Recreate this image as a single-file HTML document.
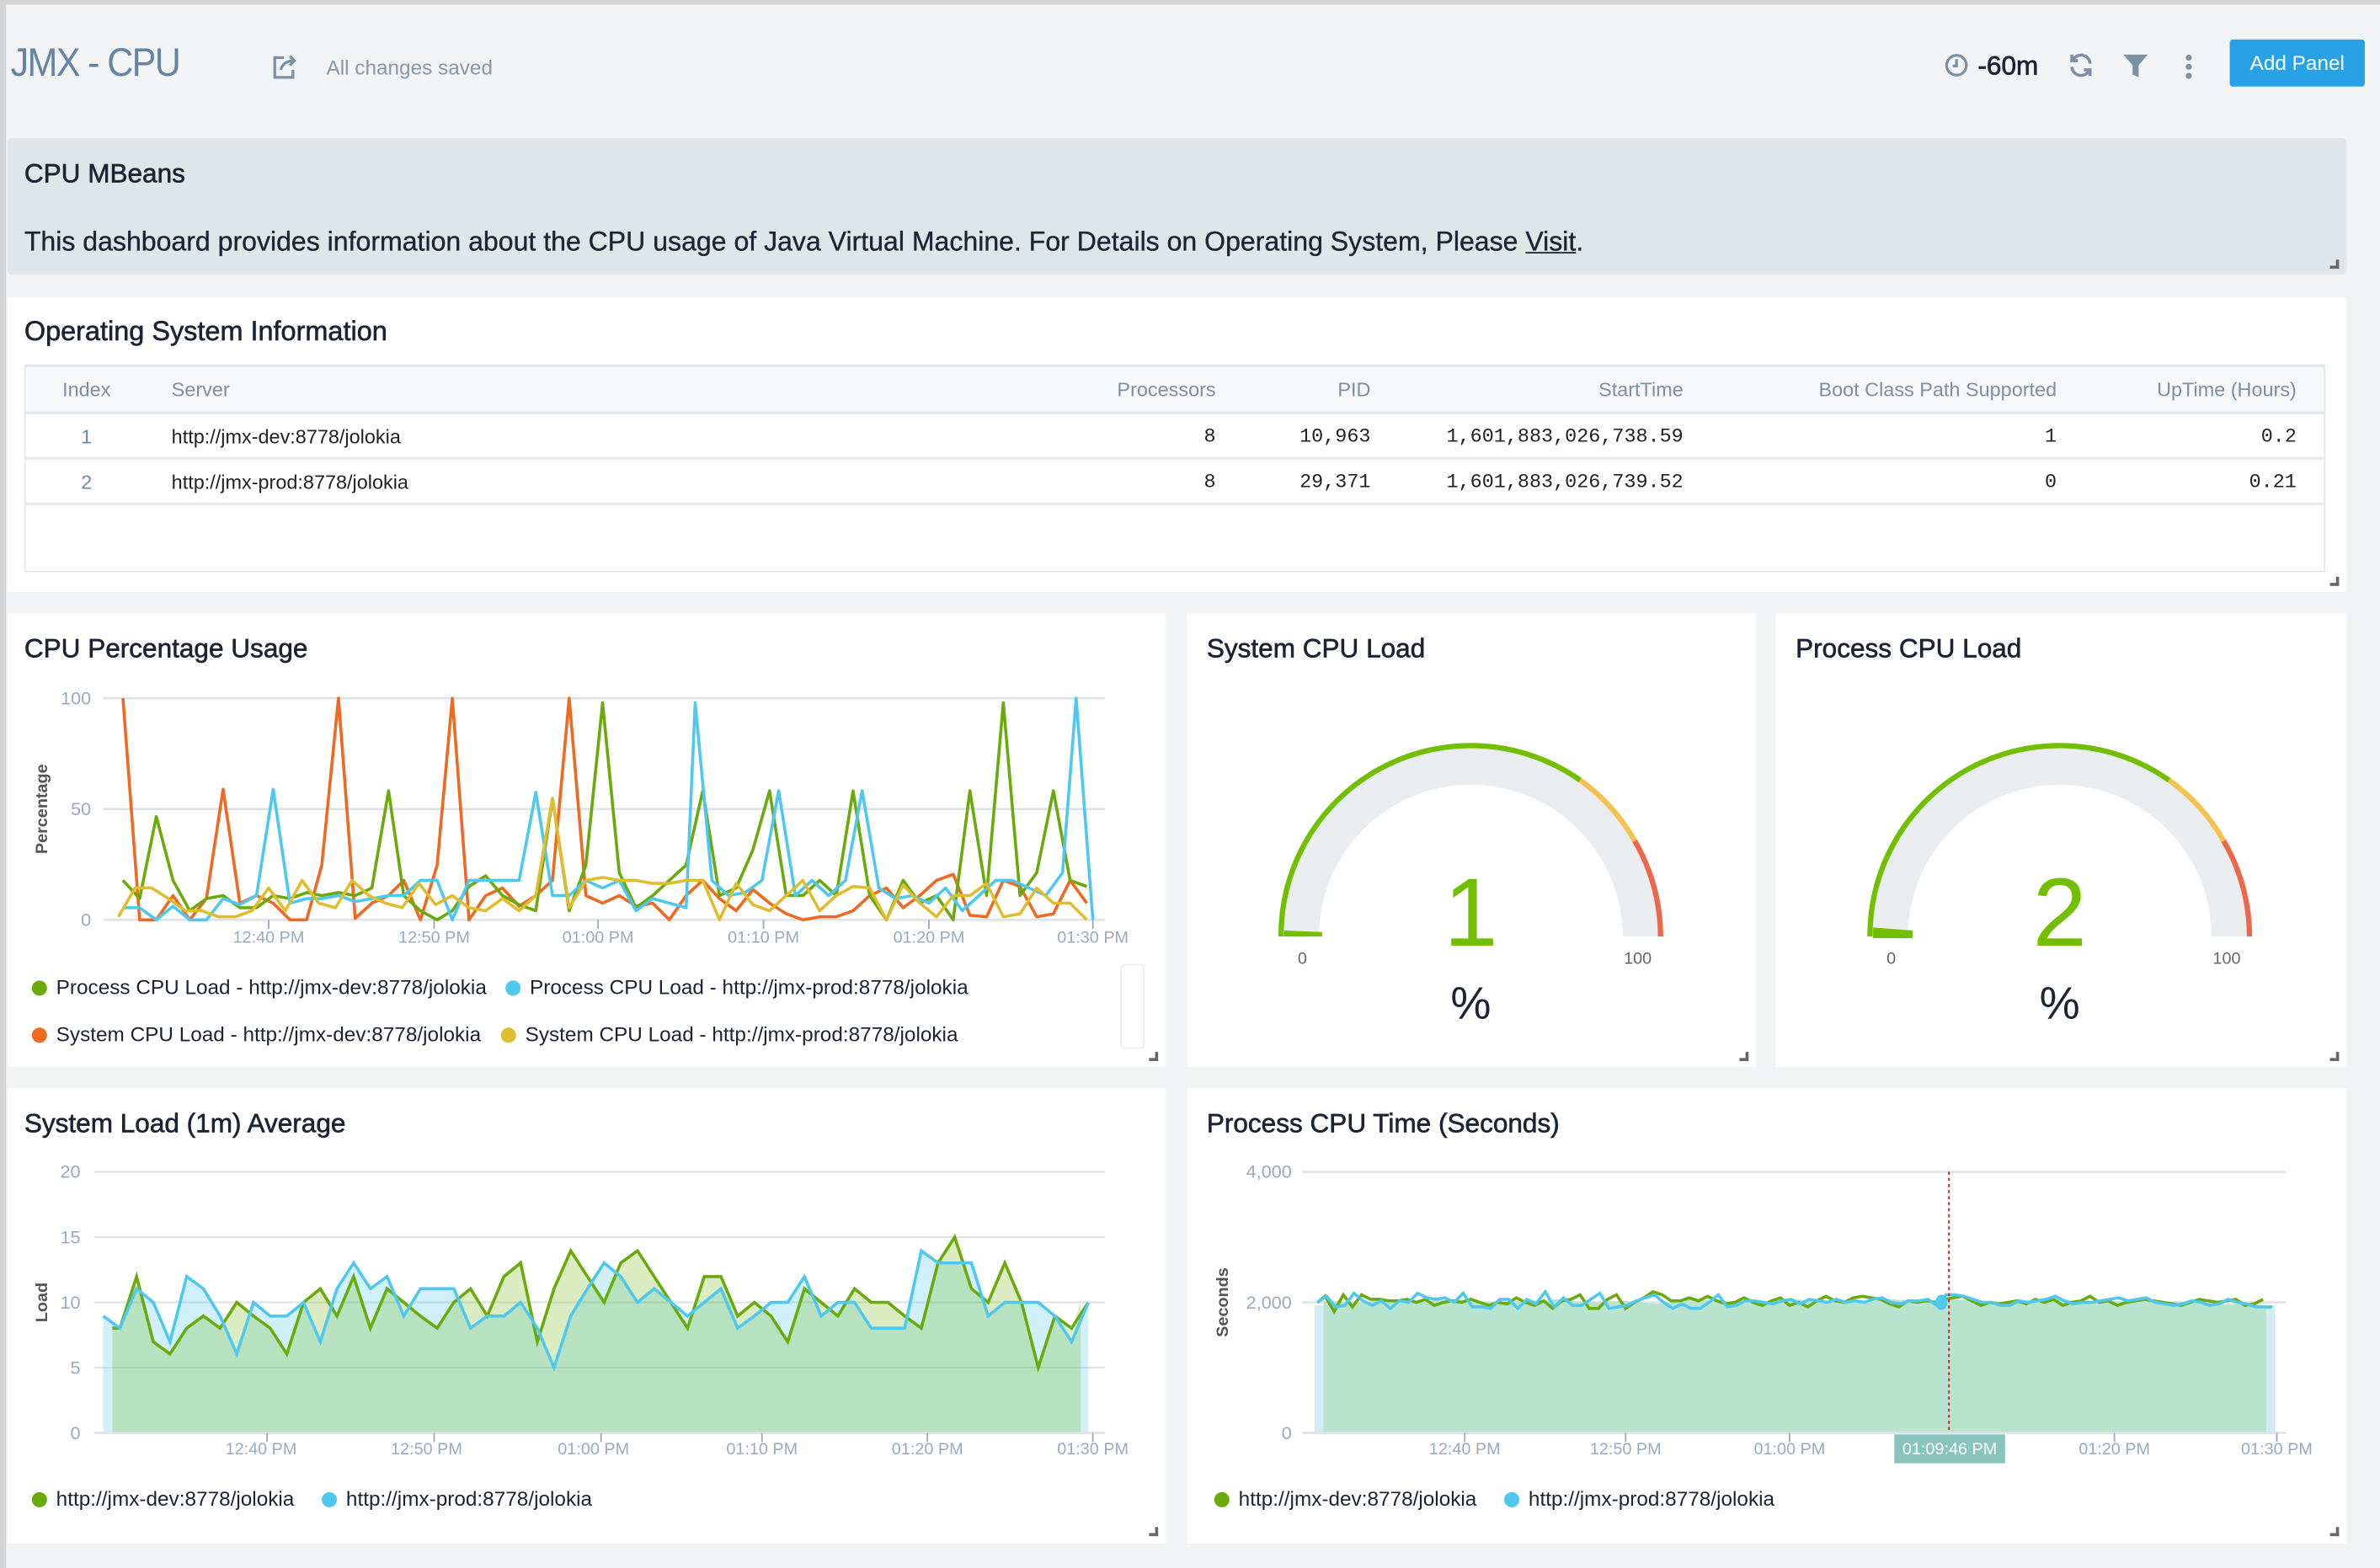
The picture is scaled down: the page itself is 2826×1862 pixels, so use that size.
<!DOCTYPE html>
<html><head><meta charset="utf-8">
<style>
*{margin:0;padding:0;box-sizing:border-box}
html,body{width:2826px;height:1862px;overflow:hidden;background:#f2f3f5}
#root{position:absolute;left:0;top:0;width:1568px;height:1033px;transform:scale(1.80230,1.80252);transform-origin:0 0;background:#f2f3f5;font-family:"Liberation Sans",sans-serif;color:#1c2434}
.abs{position:absolute}
.panel{position:absolute;background:#fff}
.title{position:absolute;font-size:17.5px;-webkit-text-stroke:0.35px #1c2434;white-space:nowrap}
.corner{position:absolute;width:6px;height:6px;border-right:2px solid #666;border-bottom:2px solid #666}
table{border-collapse:collapse;width:100%;font-size:13px}
th{font-weight:normal;color:#7d8fa3;height:30px;background:#f7f8fa;border-bottom:2px solid #e3e7eb}
td{height:30px;border-bottom:2px solid #e8ebee;font-family:"Liberation Mono",monospace;font-size:13px;color:#222}
.r{text-align:right}
.leg{position:absolute;font-size:13.5px;white-space:nowrap;color:#1c2434}
.dot{display:inline-block;width:10px;height:10px;border-radius:50%;margin-right:6px;vertical-align:-1px}
</style></head><body>
<div id="root">
<div class="abs" style="left:0;top:0;width:1568px;height:3px;background:#d4d4d4"></div>
<div class="abs" style="left:0;top:0;width:4px;height:1033px;background:#d4d4d4"></div>

<!-- header -->
<div class="abs" style="left:7px;top:26px;font-size:26px;color:#6484a3;font-weight:300;letter-spacing:-1px;transform:scaleX(0.92);transform-origin:0 0">JMX - CPU</div>
<svg class="abs" style="left:179px;top:35px" width="18" height="18" viewBox="0 0 18 18"><path d="M8 3H2v13h12v-5" fill="none" stroke="#7d8fa3" stroke-width="1.8"/><path d="M6 11c1-4 4-6 9-6M12 2l3 3-3 3" fill="none" stroke="#7d8fa3" stroke-width="1.8"/></svg>
<div class="abs" style="left:215px;top:37px;font-size:13.5px;color:#8796a8">All changes saved</div>
<svg class="abs" style="left:1281px;top:35px" width="16" height="16"><circle cx="8" cy="8" r="6.5" fill="none" stroke="#7d8fa3" stroke-width="1.8"/><path d="M8 4v4.5h-2.5" fill="none" stroke="#7d8fa3" stroke-width="1.8"/></svg>
<div class="abs" style="left:1303px;top:33px;font-size:17.5px;color:#1c2434;-webkit-text-stroke:0.4px #1c2434">-60m</div>
<svg class="abs" style="left:1362px;top:34px" width="18" height="18"><path d="M15 8A6 6 0 0 0 4 5M3 10a6 6 0 0 0 11 3" fill="none" stroke="#7d8fa3" stroke-width="2"/><path d="M3 2v4h4M15 16v-4h-4" fill="none" stroke="#7d8fa3" stroke-width="2"/></svg>
<svg class="abs" style="left:1398px;top:35px" width="18" height="17"><path d="M1 1h16l-6 7v8l-4-2V8z" fill="#7d8fa3"/></svg>
<div class="abs" style="left:1440px;top:36px;width:4px;height:4px;border-radius:2px;background:#7d8fa3"></div>
<div class="abs" style="left:1440px;top:42px;width:4px;height:4px;border-radius:2px;background:#7d8fa3"></div>
<div class="abs" style="left:1440px;top:48px;width:4px;height:4px;border-radius:2px;background:#7d8fa3"></div>
<div class="abs" style="left:1469px;top:26px;width:89px;height:31px;background:#28a1e7;border-radius:2px;color:#fff;font-size:13.5px;text-align:center;line-height:31px">Add Panel</div>

<!-- text panel -->
<div class="panel" style="left:5px;top:91px;width:1541px;height:90px;background:#e0e5ea;border-radius:3px"></div>
<div class="title" style="left:16px;top:104px">CPU MBeans</div>
<div class="abs" style="left:16px;top:149px;font-size:17.8px;white-space:nowrap;-webkit-text-stroke:0.2px #1c2434">This dashboard provides information about the CPU usage of Java Virtual Machine. For Details on Operating System, Please <u>Visit</u>.</div>
<div class="corner" style="left:1535px;top:171px"></div>

<!-- OS info -->
<div class="panel" style="left:5px;top:196px;width:1541px;height:194px"></div>
<div class="title" style="left:16px;top:208px;font-size:18px">Operating System Information</div>
<div class="abs" style="left:16px;top:240px;width:1516px;height:137px;border:1px solid #e3e7eb;border-top:2px solid #e3e7eb">
<table>
<tr><th style="width:80px;text-align:center">Index</th><th style="text-align:left;padding-left:16px">Server</th><th class="r" style="width:240px;padding-right:8px">Processors</th><th class="r" style="width:94px;padding-right:0">PID</th><th class="r" style="width:206px">StartTime</th><th class="r" style="width:246px">Boot Class Path Supported</th><th class="r" style="width:176px;padding-right:18px">UpTime (Hours)</th></tr>
<tr><td style="text-align:center;color:#6b88ad;font-family:'Liberation Sans',sans-serif">1</td><td style="padding-left:16px;font-family:'Liberation Sans',sans-serif">http://jmx-dev:8778/jolokia</td><td class="r" style="padding-right:8px">8</td><td class="r">10,963</td><td class="r">1,601,883,026,738.59</td><td class="r">1</td><td class="r" style="padding-right:18px">0.2</td></tr>
<tr><td style="text-align:center;color:#6b88ad;font-family:'Liberation Sans',sans-serif">2</td><td style="padding-left:16px;font-family:'Liberation Sans',sans-serif">http://jmx-prod:8778/jolokia</td><td class="r" style="padding-right:8px">8</td><td class="r">29,371</td><td class="r">1,601,883,026,739.52</td><td class="r">0</td><td class="r" style="padding-right:18px">0.21</td></tr>
</table></div>
<div class="corner" style="left:1535px;top:380px"></div>

<!-- row 3 -->
<div class="panel" style="left:5px;top:404px;width:763px;height:299px"></div>
<div class="panel" style="left:782px;top:404px;width:375px;height:299px"></div>
<div class="panel" style="left:1170px;top:404px;width:376px;height:299px"></div>
<div class="title" style="left:16px;top:417px">CPU Percentage Usage</div>
<div class="title" style="left:795px;top:417px">System CPU Load</div>
<div class="title" style="left:1183px;top:417px">Process CPU Load</div>
<div class="corner" style="left:757px;top:693px"></div>
<div class="corner" style="left:1146px;top:693px"></div>
<div class="corner" style="left:1535px;top:693px"></div>
<div class="abs" style="left:738px;top:635px;width:16px;height:56px;border:1px solid #eceef0;border-radius:3px"></div>

<div class="leg" style="left:21px;top:643px"><span class="dot" style="background:#6aaa0b"></span>Process CPU Load - http://jmx-dev:8778/jolokia</div>
<div class="leg" style="left:333px;top:643px"><span class="dot" style="background:#4fc8ef"></span>Process CPU Load - http://jmx-prod:8778/jolokia</div>
<div class="leg" style="left:21px;top:674px"><span class="dot" style="background:#ee6a22"></span>System CPU Load - http://jmx-dev:8778/jolokia</div>
<div class="leg" style="left:330px;top:674px"><span class="dot" style="background:#dfbd2e"></span>System CPU Load - http://jmx-prod:8778/jolokia</div>

<!-- row 4 -->
<div class="panel" style="left:5px;top:717px;width:763px;height:300px"></div>
<div class="panel" style="left:782px;top:717px;width:764px;height:300px"></div>
<div class="title" style="left:16px;top:730px">System Load (1m) Average</div>
<div class="title" style="left:795px;top:730px">Process CPU Time (Seconds)</div>
<div class="corner" style="left:757px;top:1006px"></div>
<div class="corner" style="left:1535px;top:1006px"></div>
<div class="leg" style="left:21px;top:980px"><span class="dot" style="background:#6aaa0b"></span>http://jmx-dev:8778/jolokia</div>
<div class="leg" style="left:212px;top:980px"><span class="dot" style="background:#4fc8ef"></span>http://jmx-prod:8778/jolokia</div>
<div class="leg" style="left:800px;top:980px"><span class="dot" style="background:#6aaa0b"></span>http://jmx-dev:8778/jolokia</div>
<div class="leg" style="left:991px;top:980px"><span class="dot" style="background:#4fc8ef"></span>http://jmx-prod:8778/jolokia</div>

<svg class="abs" style="left:0;top:0" width="1568" height="1033" font-family="Liberation Sans, sans-serif">
<!-- CPU chart -->
<g stroke="#dde3e8" stroke-width="1.5"><line x1="68" y1="460" x2="728" y2="460"/><line x1="68" y1="533" x2="728" y2="533"/><line x1="68" y1="606" x2="728" y2="606"/></g>
<g fill="#9aaabd" font-size="12" text-anchor="end"><text x="60" y="464">100</text><text x="60" y="537">50</text><text x="60" y="610">0</text></g>
<text transform="translate(31,533) rotate(-90)" text-anchor="middle" font-size="11" font-weight="bold" fill="#555">Percentage</text>
<g stroke="#9aaabd" stroke-width="1"><line x1="177" y1="606" x2="177" y2="612"/><line x1="286" y1="606" x2="286" y2="612"/><line x1="394" y1="606" x2="394" y2="612"/><line x1="503" y1="606" x2="503" y2="612"/><line x1="612" y1="606" x2="612" y2="612"/><line x1="720" y1="606" x2="720" y2="612"/></g>
<g fill="#9aaabd" font-size="11" text-anchor="middle"><text x="177" y="621">12:40 PM</text><text x="286" y="621">12:50 PM</text><text x="394" y="621">01:00 PM</text><text x="503" y="621">01:10 PM</text><text x="612" y="621">01:20 PM</text><text x="720" y="621">01:30 PM</text></g>
<g fill="none" stroke-width="2" stroke-linejoin="round">
<polyline stroke="#ee6a22" points="81,460 92,606 103,606 114,590 125,606 136,592 147,520 158,595 169,590 180,595 191,606 202,606 212,570 223,460 234,605 245,595 256,590 266,580 277,606 288,570 298,460 309,606 320,590 331,585 342,597 353,590 364,580 375,460 386,590 397,595 408,590 419,597 430,595 441,606 452,590 463,580 474,592 485,600 496,586 507,595 518,602 529,606 540,604 551,604 562,600 573,590 584,585 595,598 606,590 617,580 628,576 639,603 650,604 661,580 672,584 683,604 694,602 705,580 716,595"/>
<polyline stroke="#6aaa0b" points="81,580 92,592 103,538 114,580 125,600 136,592 147,590 158,598 169,598 180,590 191,592 202,588 212,590 223,588 234,590 245,585 256,521 266,590 277,600 288,606 298,600 309,584 320,577 331,590 342,596 353,600 364,526 375,600 386,570 397,463 408,575 419,598 430,590 441,580 452,570 463,521 474,590 485,585 496,560 507,521 518,590 529,590 540,580 551,590 562,521 573,590 584,606 595,580 606,595 617,590 628,606 639,521 650,590 661,463 672,590 683,575 694,521 705,580 716,584"/>
<polyline stroke="#4fc8ef" points="81,598 92,598 103,606 114,597 125,606 136,606 147,592 158,596 169,590 180,520 191,595 202,592 212,592 223,590 234,594 245,592 256,590 266,590 277,580 288,580 298,606 309,580 320,580 331,580 342,580 353,522 364,590 375,590 386,580 397,585 408,580 419,600 430,592 441,595 452,598 458,463 469,580 480,590 491,588 502,580 513,521 524,590 535,580 546,590 557,580 568,521 579,585 590,592 601,590 612,595 623,585 634,600 645,590 656,580 667,580 678,585 689,590 700,575 709,460 720,606"/>
<polyline stroke="#dfbd2e" points="78,604 89,585 100,585 111,592 122,600 133,600 144,604 155,604 166,600 177,585 188,600 199,580 210,595 221,598 232,580 243,590 254,595 265,598 276,582 287,596 298,590 309,598 320,600 331,592 342,600 353,590 364,526 375,598 386,580 397,578 408,580 419,580 430,582 441,582 452,580 463,580 474,606 485,582 496,596 507,600 518,590 529,580 540,600 551,590 562,584 573,585 584,606 595,583 606,595 617,604 628,590 639,590 650,582 661,604 672,602 683,585 694,595 705,595 716,606"/>
</g>

<!-- gauges -->
<g>
<path d="M856 617 A113 113 0 0 1 1082 617" fill="none" stroke="#eaedf0" stroke-width="26"/>
<path d="M844 617 A125 125 0 0 1 1041 514" fill="none" stroke="#72bf00" stroke-width="3.5"/>
<path d="M1041 514 A125 125 0 0 1 1077 554" fill="none" stroke="#f5c250" stroke-width="3.5"/>
<path d="M1077 554 A125 125 0 0 1 1094 617" fill="none" stroke="#f0664a" stroke-width="3.5"/>
<path d="M846 613 L871 614 L871 617 L846 617 Z" fill="#72bf00"/>
<text x="969" y="623" text-anchor="middle" font-size="64" fill="#72bf00">1</text>
<text x="858" y="635" text-anchor="middle" font-size="11" fill="#666">0</text>
<text x="1079" y="635" text-anchor="middle" font-size="11" fill="#666">100</text>
<text x="969" y="671" text-anchor="middle" font-size="30" fill="#1c2434">%</text>
</g>
<g>
<path d="M1244 617 A113 113 0 0 1 1470 617" fill="none" stroke="#eaedf0" stroke-width="26"/>
<path d="M1232 617 A125 125 0 0 1 1429 514" fill="none" stroke="#72bf00" stroke-width="3.5"/>
<path d="M1429 514 A125 125 0 0 1 1465 554" fill="none" stroke="#f5c250" stroke-width="3.5"/>
<path d="M1465 554 A125 125 0 0 1 1482 617" fill="none" stroke="#f0664a" stroke-width="3.5"/>
<path d="M1234 611 L1260 613 L1260 618 L1234 618 Z" fill="#72bf00"/>
<text x="1357" y="623" text-anchor="middle" font-size="64" fill="#72bf00">2</text>
<text x="1246" y="635" text-anchor="middle" font-size="11" fill="#666">0</text>
<text x="1467" y="635" text-anchor="middle" font-size="11" fill="#666">100</text>
<text x="1357" y="671" text-anchor="middle" font-size="30" fill="#1c2434">%</text>
</g>

<!-- system load chart -->
<g stroke="#dde3e8" stroke-width="1.2"><line x1="62" y1="772" x2="728" y2="772"/><line x1="62" y1="815" x2="728" y2="815"/><line x1="62" y1="858" x2="728" y2="858"/><line x1="62" y1="901" x2="728" y2="901"/></g>
<g fill="#9aaabd" font-size="12" text-anchor="end"><text x="53" y="776">20</text><text x="53" y="819">15</text><text x="53" y="862">10</text><text x="53" y="905">5</text><text x="53" y="948">0</text></g>
<text transform="translate(31,858) rotate(-90)" text-anchor="middle" font-size="11" font-weight="bold" fill="#555">Load</text>
<polygon fill="rgba(90,200,240,0.28)" points="68,944 68,867 79,875 90,849 101,858 112,884 123,841 134,849 145,867 156,892 167,858 178,867 189,867 200,858 211,884 222,849 233,832 244,849 255,841 266,867 277,849 288,849 299,849 310,875 321,867 332,867 343,858 354,875 365,901 376,867 387,849 398,832 409,841 420,858 431,849 442,858 453,867 464,858 475,849 486,875 497,867 508,858 519,858 530,841 541,867 552,858 563,858 574,875 585,875 596,875 607,824 618,832 629,832 640,832 651,867 662,858 673,858 684,858 695,867 706,884 717,858 717,944"/>
<polygon fill="rgba(110,180,10,0.25)" points="74,944 74,875 79,875 90,841 101,884 112,892 123,875 134,867 145,875 156,858 167,867 178,875 189,892 200,858 211,849 222,867 233,841 244,875 255,849 266,858 277,867 288,875 299,858 310,849 321,867 332,841 343,832 354,884 365,849 376,824 387,841 398,858 409,832 420,824 431,841 442,858 453,875 464,841 475,841 486,867 497,858 508,867 519,884 530,849 541,858 552,867 563,849 574,858 585,858 596,867 607,875 618,832 629,815 640,849 651,858 662,832 673,858 684,901 695,867 706,875 712,858 712,944"/>
<polyline fill="none" stroke="#6aaa0b" stroke-width="2" points="74,875 79,875 90,841 101,884 112,892 123,875 134,867 145,875 156,858 167,867 178,875 189,892 200,858 211,849 222,867 233,841 244,875 255,849 266,858 277,867 288,875 299,858 310,849 321,867 332,841 343,832 354,884 365,849 376,824 387,841 398,858 409,832 420,824 431,841 442,858 453,875 464,841 475,841 486,867 497,858 508,867 519,884 530,849 541,858 552,867 563,849 574,858 585,858 596,867 607,875 618,832 629,815 640,849 651,858 662,832 673,858 684,901 695,867 706,875 717,858"/>
<polyline fill="none" stroke="#4fc8ef" stroke-width="2" points="68,867 79,875 90,849 101,858 112,884 123,841 134,849 145,867 156,892 167,858 178,867 189,867 200,858 211,884 222,849 233,832 244,849 255,841 266,867 277,849 288,849 299,849 310,875 321,867 332,867 343,858 354,875 365,901 376,867 387,849 398,832 409,841 420,858 431,849 442,858 453,867 464,858 475,849 486,875 497,867 508,858 519,858 530,841 541,867 552,858 563,858 574,875 585,875 596,875 607,824 618,832 629,832 640,832 651,867 662,858 673,858 684,858 695,867 706,884 717,858"/>
<line x1="62" y1="944" x2="728" y2="944" stroke="#dde3e8" stroke-width="1.5"/>
<g stroke="#9aaabd"><line x1="176" y1="944" x2="176" y2="950"/><line x1="286" y1="944" x2="286" y2="950"/><line x1="396" y1="944" x2="396" y2="950"/><line x1="502" y1="944" x2="502" y2="950"/><line x1="611" y1="944" x2="611" y2="950"/><line x1="720" y1="944" x2="720" y2="950"/></g>
<g fill="#9aaabd" font-size="11" text-anchor="middle"><text x="172" y="958">12:40 PM</text><text x="281" y="958">12:50 PM</text><text x="391" y="958">01:00 PM</text><text x="502" y="958">01:10 PM</text><text x="611" y="958">01:20 PM</text><text x="720" y="958">01:30 PM</text></g>

<!-- process cpu time chart -->
<g stroke="#dde3e8" stroke-width="1.5"><line x1="858" y1="772" x2="1506" y2="772"/><line x1="858" y1="858" x2="1506" y2="858"/></g>
<g fill="#9aaabd" font-size="12" text-anchor="end"><text x="851" y="776">4,000</text><text x="851" y="862">2,000</text><text x="851" y="948">0</text></g>
<text transform="translate(809,858) rotate(-90)" text-anchor="middle" font-size="11" font-weight="bold" fill="#555">Seconds</text>
<rect x="866" y="860" width="633" height="84" fill="#d3ecf3"/>
<polygon fill="#b8e3cf" points="872,944 872,857 894,858 916,856 938,857 960,856 982,858 1004,857 1026,856 1048,858 1070,857 1092,859 1114,856 1136,857 1158,858 1180,856 1202,857 1224,858 1246,856 1268,857 1290,856 1312,858 1334,857 1356,856 1378,858 1400,857 1422,857 1444,858 1466,859 1493,860 1493,944"/>
<polyline fill="none" stroke="#6aaa0b" stroke-width="2" points="868,858 873,854 879,864 885,853 891,861 897,853 903,856 909,856 915,857 921,857 927,856 933,858 939,856 945,860 951,858 957,857 963,858 969,856 975,858 981,860 987,858 993,859 999,855 1005,858 1011,860 1017,857 1023,862 1029,857 1035,856 1041,853 1047,862 1053,862 1059,856 1065,853 1071,862 1077,858 1083,855 1089,851 1095,853 1101,857 1107,857 1113,855 1119,857 1125,854 1131,857 1137,859 1143,858 1149,855 1155,858 1161,860 1167,857 1173,855 1179,860 1185,858 1191,861 1197,857 1203,854 1209,857 1215,858 1221,855 1227,854 1233,855 1239,856 1245,859 1251,861 1257,857 1263,858 1269,857 1275,858 1281,856 1287,855 1293,854 1299,857 1305,860 1311,858 1317,859 1323,858 1329,857 1335,859 1341,856 1347,858 1353,856 1359,860 1365,858 1371,857 1377,854 1383,858 1389,857 1395,860 1401,858 1407,857 1413,856 1419,857 1425,858 1431,859 1437,860 1443,858 1449,856 1455,857 1461,858 1467,857 1473,856 1479,860 1485,859 1491,856"/>
<polyline fill="none" stroke="#4fc8ef" stroke-width="2" points="868,858 874,854 880,861 886,860 892,852 898,857 904,860 910,857 916,862 922,857 928,858 934,852 940,855 946,856 952,855 958,858 964,852 970,861 976,861 982,862 988,856 994,856 1000,862 1006,856 1012,859 1018,851 1024,861 1030,855 1036,860 1042,860 1048,856 1054,852 1060,862 1066,861 1072,860 1078,857 1084,855 1090,853 1096,858 1102,862 1108,859 1114,862 1120,862 1126,858 1132,853 1138,861 1144,860 1150,857 1156,857 1162,858 1168,859 1174,857 1180,856 1186,859 1192,856 1198,857 1204,858 1210,856 1216,858 1222,857 1228,858 1234,856 1240,855 1246,858 1252,859 1258,857 1264,857 1270,856 1276,860 1282,853 1288,853 1294,854 1300,856 1306,858 1312,858 1318,860 1324,860 1330,857 1336,858 1342,857 1348,856 1354,854 1360,857 1366,859 1372,858 1378,858 1384,857 1390,856 1396,855 1402,857 1408,856 1414,855 1420,858 1426,859 1432,860 1438,859 1444,857 1450,858 1456,860 1462,859 1468,856 1474,858 1480,859 1486,861 1492,861 1497,861"/>
<line x1="1284" y1="772" x2="1284" y2="944" stroke="#b22" stroke-width="1" stroke-dasharray="2,2"/>
<ellipse cx="1279" cy="858" rx="4" ry="5" fill="#4fc8ef"/>
<line x1="858" y1="944" x2="1506" y2="944" stroke="#dde3e8" stroke-width="1.5"/>
<g stroke="#9aaabd"><line x1="965" y1="944" x2="965" y2="950"/><line x1="1071" y1="944" x2="1071" y2="950"/><line x1="1179" y1="944" x2="1179" y2="950"/><line x1="1393" y1="944" x2="1393" y2="950"/><line x1="1500" y1="944" x2="1500" y2="950"/></g>
<g fill="#9aaabd" font-size="11" text-anchor="middle"><text x="965" y="958">12:40 PM</text><text x="1071" y="958">12:50 PM</text><text x="1179" y="958">01:00 PM</text><text x="1393" y="958">01:20 PM</text><text x="1500" y="958">01:30 PM</text></g>
<rect x="1248" y="945" width="73" height="19" fill="#88c4bc"/>
<text x="1284.5" y="958" text-anchor="middle" font-size="11" fill="#fff">01:09:46 PM</text>
</svg>
</div>
</body></html>
